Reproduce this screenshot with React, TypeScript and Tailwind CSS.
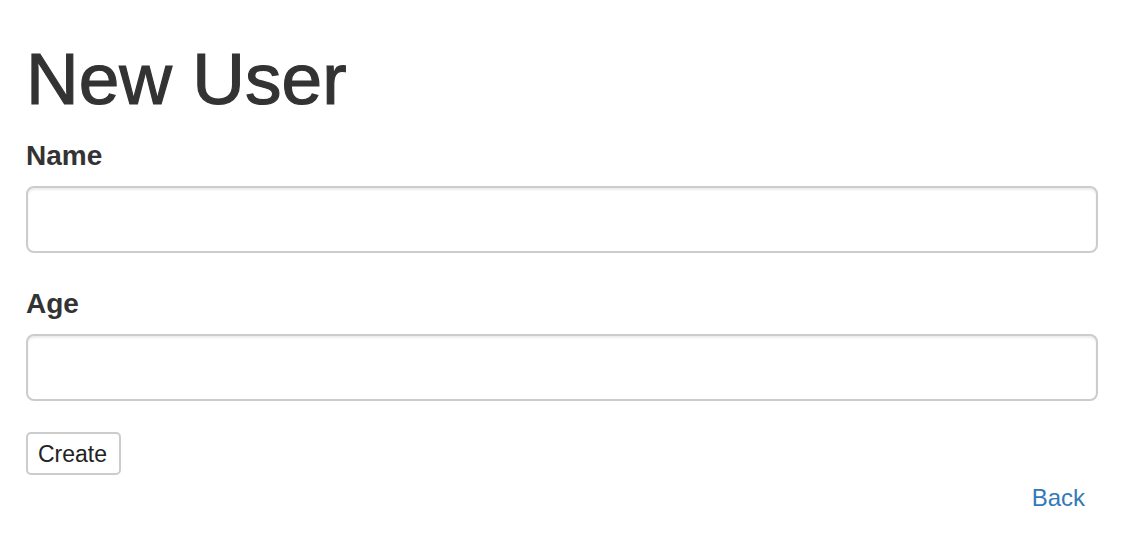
import React from "react";

export default function App() {
  return (
    <div
      className="h-[558px] overflow-hidden bg-white pt-[1px] pl-[26px] pr-[28px] text-[#333]"
      style={{ fontFamily: '"Liberation Sans", Arial, Helvetica, sans-serif' }}
    >
      <h1 className="mt-[38px] mb-[18px] text-[73px] leading-[79px] font-normal [-webkit-text-stroke:1.2px_#333]">
        New User
      </h1>
      <form onSubmit={(e) => e.preventDefault()}>
        <div className="mb-[31px]">
          <label className="block text-[28px] leading-[40px] font-bold mb-[10px]">Name</label>
          <input
            type="text"
            className="block w-full h-[67px] rounded-[8px] border-2 border-[#ccc] bg-white shadow-[inset_0_2px_2px_rgba(0,0,0,0.075)] outline-none"
          />
        </div>
        <div className="mb-[31px]">
          <label className="block text-[28px] leading-[40px] font-bold mb-[10px]">Age</label>
          <input
            type="text"
            className="block w-full h-[67px] rounded-[8px] border-2 border-[#ccc] bg-white shadow-[inset_0_2px_2px_rgba(0,0,0,0.075)] outline-none"
          />
        </div>
        <button
          type="submit"
          className="block h-[43px] rounded-[5px] border-2 border-[#ccc] bg-white pl-[10px] pr-[12px] text-[23px] leading-[26px] text-[#222]"
        >
          Create
        </button>
      </form>
      <div className="mt-[6px] pr-[13px] text-right">
        <a href="#" className="text-[24px] leading-[34px] text-[#337ab7]">
          Back
        </a>
      </div>
    </div>
  );
}
